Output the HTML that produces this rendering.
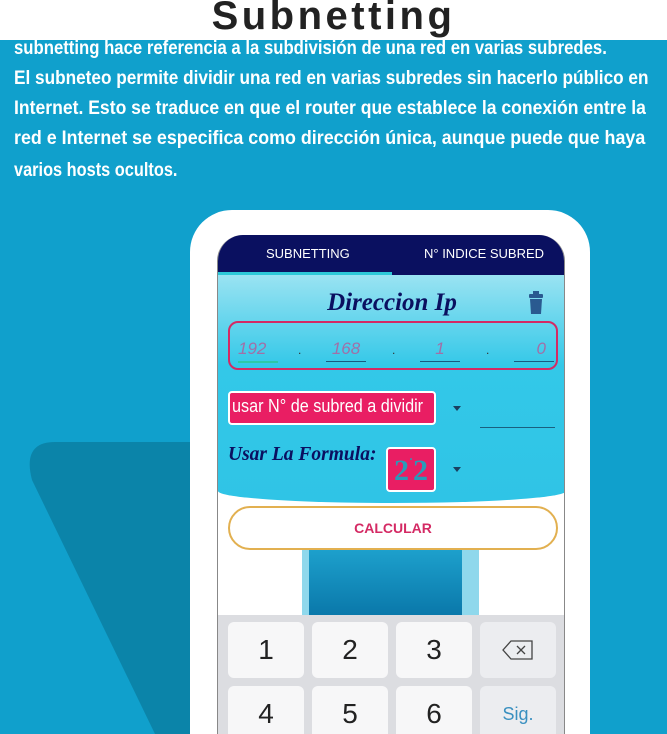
<!DOCTYPE html>
<html><head><meta charset="utf-8"><style>
*{margin:0;padding:0;box-sizing:border-box}
html,body{width:667px;height:734px;overflow:hidden}
body{background:#10a0cc;position:relative;font-family:"Liberation Sans",sans-serif}
.top{position:absolute;left:0;top:0;width:667px;height:40px;background:#fff}
.title{position:absolute;left:0;width:667px;top:-6px;text-align:center;font:bold 40px "Liberation Sans",sans-serif;color:#222;letter-spacing:3.5px}
.p{position:absolute;left:14px;color:#fff;font-weight:bold;font-size:19px;white-space:nowrap;transform-origin:0 0}
.dark{position:absolute;left:0;top:0}
.frame{position:absolute;left:190px;top:210px;width:400px;height:524px;background:#fff;border-radius:42px 42px 0 0}
.screen{position:absolute;left:217px;top:235px;width:348px;height:499px;background:#fff;border-left:1px solid #888;border-right:1px solid #888;border-radius:26px 26px 0 0;overflow:hidden}
.tabs{position:absolute;left:0;top:0;width:348px;height:40px;background:#0a1060;color:#fff;font-size:13px}
.tabs span{position:absolute;top:11px}
.ind{position:absolute;left:0;top:37px;width:174px;height:3px;background:#2cc8d8}
.content{position:absolute;left:0;top:40px;width:348px;height:228px;background:linear-gradient(#9ae3f2,#33c8e8 40%,#2fc4e6);border-radius:0 0 50% 50%/0 0 12px 12px}
.dir{position:absolute;left:0;width:348px;top:54px;text-align:center;font:italic bold 25px "Liberation Serif",serif;color:#0a1060}
.ipbox{position:absolute;left:10px;top:86px;width:330px;height:49px;border:2px solid #d42a64;border-radius:10px}
.oct{position:absolute;top:16px;width:40px;font:italic 17px "Liberation Sans",sans-serif;color:#a070a8;border-bottom:1px solid #1a5a80;padding-bottom:2px}
.dot{position:absolute;top:20px;color:#333;font-size:12px}
.sel{position:absolute;left:10px;top:156px;width:208px;height:34px;background:#e91e63;border:2px solid #fff;border-radius:4px;color:#fff;font-size:18px;padding:3px 0 0 2px;white-space:nowrap;overflow:hidden}
.sel span{display:inline-block;transform:scaleX(.9);transform-origin:0 0}
.arr{position:absolute;width:0;height:0;border-left:4px solid transparent;border-right:4px solid transparent;border-top:5px solid #1a4060}
.f{position:absolute;left:10px;top:209px;font:italic bold 19.5px "Liberation Serif",serif;color:#0a1060}
.fbox{position:absolute;left:168px;top:212px;width:50px;height:45px;background:#e91e63;border:2px solid #fff;border-radius:4px;color:#2a9ab8;font:bold 30px "Liberation Serif",serif;text-align:center;line-height:44px}
.calc{position:absolute;left:10px;top:271px;width:330px;height:44px;border:2px solid #e2b050;border-radius:22px;background:#fff;color:#d42a64;font-size:14px;font-weight:bold;text-align:center;line-height:40px}
.kb{position:absolute;left:0;top:380px;width:348px;height:140px;background:#dcdde1}
.k{position:absolute;width:76px;height:56px;background:#f7f7f8;border-radius:6px;text-align:center;font-size:28px;color:#222;line-height:56px}
</style></head><body>
<svg class="dark" width="667" height="734"><path d="M55 442 L200 442 L200 734 L155 734 L32 480 Q22 442 55 442Z" fill="#0b84a9"/></svg>
<div class="top"></div>
<div class="title">Subnetting</div>
<div class="p" style="top:38px;transform:scaleX(.88)">subnetting hace referencia a la subdivisión de una red en varias subredes.</div>
<div class="p" style="top:68px;transform:scaleX(.905)">El subneteo permite dividir una red en varias subredes sin hacerlo público en</div>
<div class="p" style="top:98px;transform:scaleX(.925)">Internet. Esto se traduce en que el router que establece la conexión entre la</div>
<div class="p" style="top:128px;transform:scaleX(.94)">red e Internet se especifica como dirección única, aunque puede que haya</div>
<div class="p" style="top:160px;transform:scaleX(.86)">varios hosts ocultos.</div>
<div class="frame"></div>
<div class="screen">
 <div class="content"></div>
 <div class="tabs"><span style="left:48px">SUBNETTING</span><span style="left:206px">N° INDICE SUBRED</span><div class="ind"></div></div>
 <div class="dir">Direccion Ip</div>
 <svg style="position:absolute;left:310px;top:56px" width="16" height="24"><rect x="5" y="0" width="6" height="3" fill="#2a5a90"/><rect x="1" y="3" width="14" height="4" rx="1" fill="#2a5a90"/><path d="M2 8 H14 L13 23 H3Z" fill="#2a5a90"/></svg>
 <div class="ipbox">
  <div class="oct" style="left:8px;border-color:#2cc8a8;border-bottom-width:2px">192</div><div class="dot" style="left:68px">.</div>
  <div class="oct" style="left:96px;text-align:center">168</div><div class="dot" style="left:162px">.</div>
  <div class="oct" style="left:190px;text-align:center">1</div><div class="dot" style="left:256px">.</div>
  <div class="oct" style="left:284px;text-align:right;padding-right:8px">0</div>
 </div>
 <div class="sel"><span>usar N° de subred a dividir</span></div>
 <div class="arr" style="left:235px;top:171px"></div>
 <div style="position:absolute;left:262px;top:192px;width:75px;border-bottom:1px solid #1a6080"></div>
 <div class="f">Usar La Formula:</div>
 <div class="fbox">2<span style="font-size:12px;vertical-align:top;line-height:20px">·</span>2</div>
 <div class="arr" style="left:235px;top:232px"></div>
 <div style="position:absolute;left:84px;top:315px;width:177px;height:65px;background:#8fd8ec"></div>
 <div style="position:absolute;left:91px;top:315px;width:153px;height:65px;background:linear-gradient(#1da0cc,#0a78aa)"></div>
 <div class="calc">CALCULAR</div>
 <div class="kb">
  <div class="k" style="left:10px;top:7px">1</div><div class="k" style="left:94px;top:7px">2</div><div class="k" style="left:178px;top:7px">3</div>
  <div class="k" style="left:262px;top:7px;background:#ecedf0"><svg width="32" height="22" style="margin-top:17px"><path d="M9 2 H30 V20 H9 L1 11Z" fill="none" stroke="#444" stroke-width="1.3"/><path d="M15 7 L23 15 M23 7 L15 15" stroke="#444" stroke-width="1.3"/></svg></div>
  <div class="k" style="left:10px;top:71px">4</div><div class="k" style="left:94px;top:71px">5</div><div class="k" style="left:178px;top:71px">6</div>
  <div class="k" style="left:262px;top:71px;background:#ecedf0;color:#3a90c0;font-size:18px">Sig.</div>
 </div>
</div>
</body></html>
